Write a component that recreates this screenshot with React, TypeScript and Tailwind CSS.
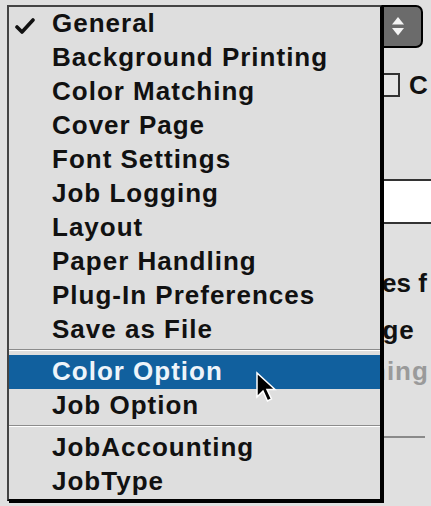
import React from "react";

type Entry = { label: string } | "sep";

const entries: Entry[] = [
  { label: "General" },
  { label: "Background Printing" },
  { label: "Color Matching" },
  { label: "Cover Page" },
  { label: "Font Settings" },
  { label: "Job Logging" },
  { label: "Layout" },
  { label: "Paper Handling" },
  { label: "Plug-In Preferences" },
  { label: "Save as File" },
  "sep",
  { label: "Color Option" },
  { label: "Job Option" },
  "sep",
  { label: "JobAccounting" },
  { label: "JobType" },
];

function Check() {
  return (
    <svg width="20" height="18" viewBox="0 0 20 18" className="absolute left-[6px] top-[10px]">
      <path d="M2 10 L7 15 L18 3" fill="none" stroke="#111" strokeWidth="3.6" strokeLinecap="round" strokeLinejoin="round" />
    </svg>
  );
}

function Cursor() {
  return (
    <svg width="24" height="34" viewBox="0 0 24 34" className="absolute left-[255px] top-[371px]">
      <path d="M2 2 L2 26 L8 20 L12.5 30 L16.5 28 L12 18.5 L20 18.5 Z" fill="#000" stroke="#fff" strokeWidth="1.5" strokeLinejoin="miter" />
    </svg>
  );
}

function PopupMenu() {
  return (
    <div className="absolute left-[7px] top-[5px] w-[375px] border-2 border-[#444] border-r-black border-b-black bg-[#dedede] shadow-[2px_2px_0_#000]">
      {entries.map((e, i) =>
        e === "sep" ? (
          <div key={i} className="h-[8px] pt-[2px]">
            <div className="border-t border-[#8c8c8c]" />
            <div className="border-t border-white" />
          </div>
        ) : (
          <div
            key={i}
            className={
              "relative h-[34px] pl-[43px] leading-[32px] whitespace-nowrap " +
              (e.label === "Color Option" ? "bg-[#11609e] text-[#eef4fa]" : "text-[#111]")
            }
          >
            {e.label === "General" && <Check />}
            {e.label}
          </div>
        )
      )}
    </div>
  );
}

export default function App() {
  return (
    <div className="relative w-[431px] h-[506px] overflow-hidden bg-[#e0e0e0] font-['Liberation_Sans',Arial,sans-serif] text-[26px] font-bold tracking-[1px]">
      {/* dialog behind the menu */}
      <div className="flex flex-col pt-[5px]">
        <div className="ml-[370px] w-[53px] h-[43px] flex items-center justify-end pr-[16px] bg-[#6b6b6b] border-2 border-black border-l-0 rounded-r-[7px]">
          <svg width="14" height="21" viewBox="0 0 14 21">
            <path d="M7 1 L13 8.5 L1 8.5 Z" fill="#f4f4f4" />
            <path d="M1 12 L13 12 L7 19.5 Z" fill="#f4f4f4" />
          </svg>
        </div>
        <div className="mt-[25px] ml-[376px] flex items-center h-[24px]">
          <div className="w-[24px] h-[24px] border-2 border-[#333] bg-[#e6e6e6]" />
          <span className="ml-[9px] leading-[24px] text-[#111]">C</span>
        </div>
        <div className="mt-[82px] ml-[300px] h-[45px] border-y-2 border-[#333] bg-white" />
        <div className="mt-[42px] ml-[382px] h-[34px] leading-[34px] whitespace-nowrap tracking-[0px] text-[#111]">es f</div>
        <div className="mt-[13px] ml-[367px] h-[34px] leading-[34px] whitespace-nowrap text-[#111]">age</div>
        <div className="mt-[7px] ml-[370px] h-[34px] leading-[34px] whitespace-nowrap text-[#9a9a9a]">hing</div>
        <div className="mt-[48px] ml-[383px] w-[42px] h-[2px] bg-[#8a8a8a]" />
      </div>

      <PopupMenu />
      <Cursor />
    </div>
  );
}
